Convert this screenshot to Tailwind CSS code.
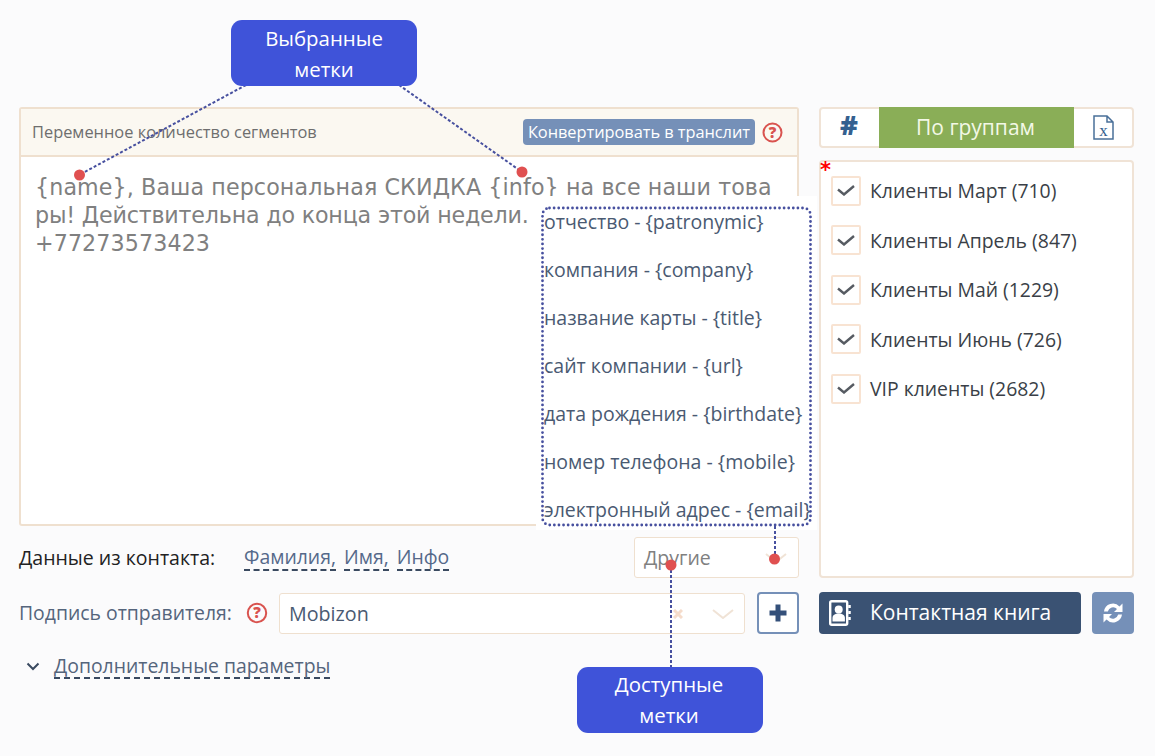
<!DOCTYPE html>
<html lang="ru">
<head>
<meta charset="utf-8">
<script src="https://cdn.jsdelivr.net/npm/@tailwindcss/browser@4"></script>
</head>
<body class="m-0 bg-[#fbfbfc]">
<div class="relative w-[1155px] h-[756px] overflow-hidden flex gap-[20px] pl-[19px] pt-[107px] font-['Open_Sans',sans-serif] text-[#3a4a60]">

  <!-- left column -->
  <div class="w-[780px] flex flex-col">
    <div class="h-[419px] border-2 border-[#efe0cf] rounded-[3px] bg-white flex flex-col">
      <div class="h-[48px] shrink-0 bg-[#fbf8f1] border-b-2 border-[#efe0cf] flex items-center pl-[11px] pr-[14px]">
        <span class="text-[16.4px] text-[#6e6e6e] whitespace-nowrap">Переменное количество сегментов</span>
        <span class="ml-auto h-[26px] px-[5px] rounded-[4px] bg-[#7590b8] text-white text-[16.400px] font-medium tracking-[-0.05px] flex items-center whitespace-nowrap">Конвертировать в транслит</span>
        <svg class="ml-[7px] w-[21px] h-[21px]" viewBox="0 0 21 21"><circle cx="10.500" cy="10.500" r="9" fill="none" stroke="#d9534f" stroke-width="2"/><text x="10.500" y="16" text-anchor="middle" font-size="15" font-weight="800" fill="#d9534f" font-family="Open Sans">?</text></svg>
      </div>
      <div class="pl-[14px] pt-[16px] text-[22.2px] leading-[28px] text-[#808080] font-['DejaVu_Sans',sans-serif] tracking-[0.1px]">
        <div class="whitespace-nowrap">{name}, Ваша персональная СКИДКА {info} на все наши това</div>
        <div class="whitespace-nowrap tracking-[-0.18px]">ры! Действительна до конца этой недели.</div>
        <div class="whitespace-nowrap">+77273573423</div>
      </div>
    </div>

    <div class="h-[41px] mt-[11px] flex items-center relative">
      <span class="text-[19.5px] text-[#222] w-[225px] whitespace-nowrap">Данные из контакта:</span>
      <div class="flex gap-[8px] text-[19.4px] text-[#55698a] leading-[24px]">
        <span class="border-b-2 border-dashed border-[#3a4a60]">Фамилия,</span>
        <span class="border-b-2 border-dashed border-[#3a4a60]">Имя,</span>
        <span class="border-b-2 border-dashed border-[#3a4a60]">Инфо</span>
      </div>
      <div class="ml-auto w-[165px] h-[41px] border border-[#efe0cf] rounded-[3px] bg-white flex items-center pl-[9px] pr-[10px] pt-[1px] text-[19.5px] text-[#808080]">
        Другие
        <svg class="ml-auto w-[24px] h-[10px]" viewBox="0 0 24 10"><path d="M2 1l10 8 10-8" fill="none" stroke="#f0e3d6" stroke-width="2"/></svg>
      </div>
    </div>

    <div class="h-[42px] mt-[14px] flex items-center">
      <span class="text-[19.4px] text-[#55657c] whitespace-nowrap">Подпись отправителя:</span>
      <svg class="ml-[14px] w-[22px] h-[22px] shrink-0" viewBox="0 0 22 22"><circle cx="11" cy="11" r="9.200" fill="none" stroke="#d9534f" stroke-width="2"/><text x="11" y="16.400" text-anchor="middle" font-size="15" font-weight="800" fill="#d9534f" font-family="Open Sans">?</text></svg>
      <div class="ml-auto w-[466px] h-[41px] shrink-0 border border-[#efe0cf] rounded-[3px] bg-white flex items-center pl-[9px] pr-[9px] pt-[1px] text-[19.7px] text-[#4a5a72]">
        Mobizon
        <svg class="ml-auto w-[10px] h-[10px]" viewBox="0 0 10 10"><path d="M1 1l8 8M9 1l-8 8" stroke="#f5dccb" stroke-width="3"/></svg>
        <svg class="ml-[28px] w-[24px] h-[10px]" viewBox="0 0 24 10"><path d="M2 1l10 8 10-8" fill="none" stroke="#f0e3d6" stroke-width="2"/></svg>
      </div>
      <div class="ml-[12px] w-[42px] h-[42px] shrink-0 border-2 border-[#7590b8] rounded-[4px] bg-white flex items-center justify-center">
        <svg class="w-[20px] h-[20px]" viewBox="0 0 20 20"><path d="M10 1.500v17M1.500 10h17" stroke="#34507a" stroke-width="5"/></svg>
      </div>
    </div>

    <div class="mt-[20px] flex items-center pl-[7px]">
      <svg class="w-[14px] h-[9px]" viewBox="0 0 14 9"><path d="M1.500 1.500L7 7l5.500-5.500" fill="none" stroke="#3a4a60" stroke-width="2"/></svg>
      <span class="ml-[14px] text-[19.4px] leading-[23px] text-[#55657c] border-b-2 border-dashed border-[#3a4a60] whitespace-nowrap">Дополнительные параметры</span>
    </div>
  </div>

  <!-- right column -->
  <div class="w-[315px] flex flex-col">
    <div class="h-[41px] border-2 border-[#f0e3d6] rounded-[4px] bg-white flex">
      <div class="w-[58px] flex items-center justify-center text-[#34608f] text-[27px] font-extrabold leading-none pb-[6px] pr-[2px]">#</div>
      <div class="w-[195px] -my-[2px] bg-[#8aae57] text-[#f3f8e6] text-[21px] flex items-center justify-center pr-[2px]">По группам</div>
      <div class="flex-1 flex items-center justify-center">
        <svg class="w-[21px] h-[25px]" viewBox="0 0 21 25"><path d="M1 1h13l6 6v17H1zM14 1v6h6" fill="none" stroke="#4a7099" stroke-width="1.500"/><text x="10.500" y="21" text-anchor="middle" font-size="17" fill="#34608f" font-family="Liberation Serif">x</text></svg>
      </div>
    </div>
    <div class="relative h-[418px] mt-[12px] border-2 border-[#f0e3d6] rounded-[4px] bg-white pl-[10px] pt-[13.600px] flex flex-col gap-[19.500px]">
      <span class="absolute left-[-1px] top-[-2px] text-[#f00] text-[21px] font-bold leading-[20px] font-['DejaVu_Sans',sans-serif]">*</span>
      <label class="flex items-center h-[30px]"><span class="w-[30px] h-[30px] border-2 border-[#f8e3d2] rounded-[2px] flex items-center justify-center"><svg class="w-[18px] h-[11px]" viewBox="0 0 18 11"><path d="M1 4.500L7 9.500 17 1" fill="none" stroke="#565b62" stroke-width="2.400"/></svg></span><span class="ml-[9px] text-[19.4px] text-[#3a3f47] whitespace-nowrap">Клиенты Март (710)</span></label>
      <label class="flex items-center h-[30px]"><span class="w-[30px] h-[30px] border-2 border-[#f8e3d2] rounded-[2px] flex items-center justify-center"><svg class="w-[18px] h-[11px]" viewBox="0 0 18 11"><path d="M1 4.500L7 9.500 17 1" fill="none" stroke="#565b62" stroke-width="2.400"/></svg></span><span class="ml-[9px] text-[19.4px] text-[#3a3f47] whitespace-nowrap">Клиенты Апрель (847)</span></label>
      <label class="flex items-center h-[30px]"><span class="w-[30px] h-[30px] border-2 border-[#f8e3d2] rounded-[2px] flex items-center justify-center"><svg class="w-[18px] h-[11px]" viewBox="0 0 18 11"><path d="M1 4.500L7 9.500 17 1" fill="none" stroke="#565b62" stroke-width="2.400"/></svg></span><span class="ml-[9px] text-[19.4px] text-[#3a3f47] whitespace-nowrap">Клиенты Май (1229)</span></label>
      <label class="flex items-center h-[30px]"><span class="w-[30px] h-[30px] border-2 border-[#f8e3d2] rounded-[2px] flex items-center justify-center"><svg class="w-[18px] h-[11px]" viewBox="0 0 18 11"><path d="M1 4.500L7 9.500 17 1" fill="none" stroke="#565b62" stroke-width="2.400"/></svg></span><span class="ml-[9px] text-[19.4px] text-[#3a3f47] whitespace-nowrap">Клиенты Июнь (726)</span></label>
      <label class="flex items-center h-[30px]"><span class="w-[30px] h-[30px] border-2 border-[#f8e3d2] rounded-[2px] flex items-center justify-center"><svg class="w-[18px] h-[11px]" viewBox="0 0 18 11"><path d="M1 4.500L7 9.500 17 1" fill="none" stroke="#565b62" stroke-width="2.400"/></svg></span><span class="ml-[9px] text-[19.4px] text-[#3a3f47] whitespace-nowrap">VIP клиенты (2682)</span></label>
    </div>
    <div class="mt-[14px] flex gap-[11px]">
      <div class="w-[262px] h-[42px] rounded-[4px] bg-[#3a5273] text-white flex items-center pl-[10px]">
        <svg class="w-[22px] h-[26px]" viewBox="0 0 22 26"><rect x="1.200" y="1.200" width="17" height="23.600" rx="1.500" fill="none" stroke="#fff" stroke-width="2.400"/><path d="M20.500 5v3M20.500 11v3M20.500 17v3" stroke="#fff" stroke-width="2.500"/><circle cx="9.700" cy="9.500" r="4" fill="#fff"/><path d="M3.500 21.500v-3.500c0-3 2.500-4.500 6.200-4.500s6.200 1.500 6.200 4.500v3.500z" fill="#fff"/></svg>
        <span class="ml-[19px] text-[21px] whitespace-nowrap">Контактная книга</span>
      </div>
      <div class="w-[42px] h-[42px] rounded-[4px] bg-[#7590b8] flex items-center justify-center">
        <svg class="w-[24px] h-[24px]" viewBox="0 0 24 24"><path d="M3 10.500A9 9 0 0 1 18.500 5.500L21.500 2.500V11H13L16 8A5.500 5.500 0 0 0 6.800 10.500Z" fill="#fff"/><path d="M21 13.500A9 9 0 0 1 5.500 18.500L2.500 21.500V13H11L8 16A5.500 5.500 0 0 0 17.200 13.500Z" fill="#fff"/></svg>
      </div>
    </div>
  </div>

  <!-- annotation overlay -->
  <div class="absolute left-[536px] top-[196px] w-[281px] h-[334px] bg-white"></div>
  <div class="absolute left-[541px] top-[207px] w-[271px] h-[319px] text-[#4a5a72] text-[19.5px] leading-[48px] whitespace-nowrap pl-[3px]">
    <div class="-mt-[9px]">отчество - {patronymic}</div>
    <div>компания - {company}</div>
    <div>название карты - {title}</div>
    <div>сайт компании - {url}</div>
    <div>дата рождения - {birthdate}</div>
    <div>номер телефона - {mobile}</div>
    <div>электронный адрес - {email}</div>
  </div>

  <svg class="absolute left-0 top-0 w-[1155px] h-[756px] pointer-events-none" viewBox="0 0 1155 756">
    <rect x="542.500" y="208" width="268" height="317" rx="7" fill="none" stroke="#47509f" stroke-width="2.800" stroke-linecap="round" stroke-dasharray="0 4.600"/>
    <g stroke="#47509f" stroke-width="2" stroke-dasharray="3 2" fill="none">
      <path d="M246 85L79 175"/>
      <path d="M399 85L522 172"/>
      <path d="M775 526V559"/>
      <path d="M671 565V667"/>
    </g>
    <g fill="#e05050">
      <circle cx="79.500" cy="175" r="5.500"/>
      <circle cx="522" cy="172" r="5.500"/>
      <circle cx="774.500" cy="559" r="5.500"/>
      <circle cx="671" cy="565" r="5.500"/>
    </g>
  </svg>

  <div class="absolute left-[231px] top-[20px] w-[186px] h-[66px] rounded-[11px] bg-[#3f53d9] text-white text-[20.400px] leading-[31px] text-center pt-[3px]">Выбранные<br>метки</div>
  <div class="absolute left-[577px] top-[667px] w-[186px] h-[66px] rounded-[11px] bg-[#3f53d9] text-white text-[20.400px] leading-[31px] text-center pt-[2px] pr-[2px]">Доступные<br>метки</div>
</div>
</body>
</html>
